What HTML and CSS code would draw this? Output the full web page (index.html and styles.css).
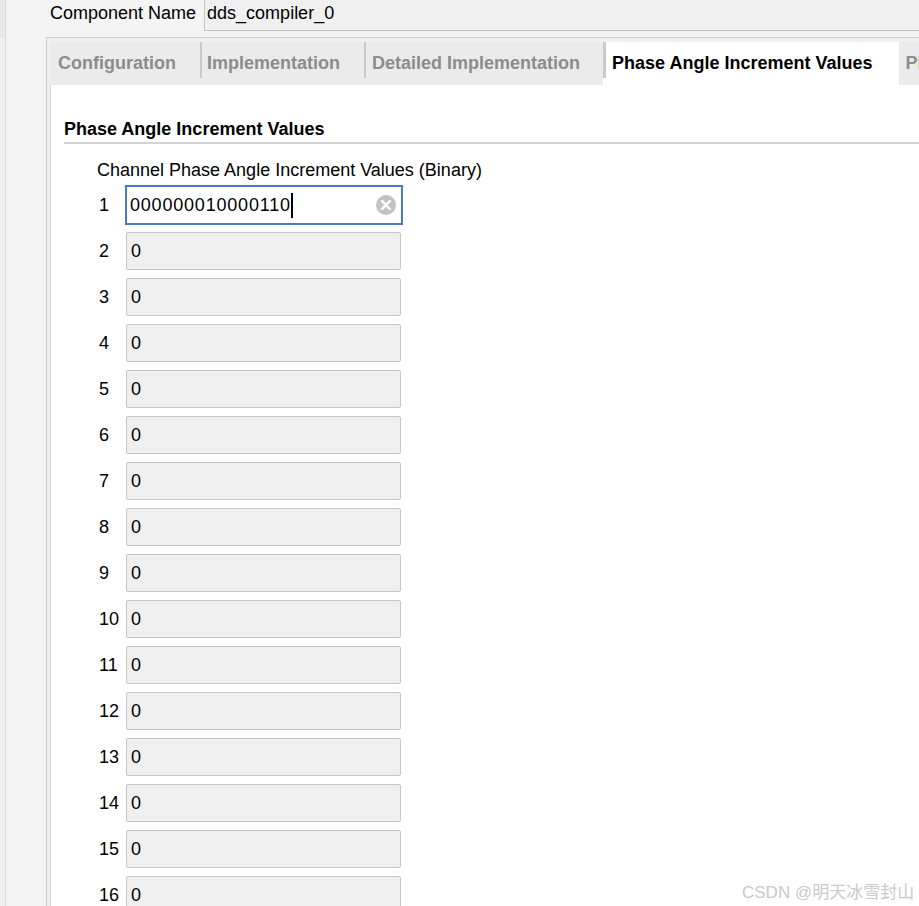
FILE: index.html
```html
<!DOCTYPE html>
<html>
<head>
<meta charset="utf-8">
<link rel="stylesheet" href="styles.css">
</head>
<body>
<div class="edge"></div>
<div class="main">
  <div class="name-row">
    <span class="name-label">Component Name</span>
    <div class="name-field">dds_compiler_0</div>
  </div>
  <div class="tabpane">
    <div class="tabs">
      <div class="tab first">Configuration</div>
      <div class="tab">Implementation</div>
      <div class="tab third">Detailed Implementation</div>
      <div class="tab active">Phase Angle Increment Values</div>
      <div class="tab last">Phase Offset Values</div>
    </div>
    <div class="content">
      <div class="section-title">Phase Angle Increment Values</div>
      <div class="field-label">Channel Phase Angle Increment Values (Binary)</div>
      <div class="rows">
        <div class="row"><span class="num">1</span><div class="input focused"><span class="val">000000010000110</span><span class="caret"></span><span class="clear"><svg width="20" height="20" viewBox="0 0 20 20"><circle cx="10" cy="10" r="10" fill="#c2c2c2"/><path d="M6.2 6.2 L13.8 13.8 M13.8 6.2 L6.2 13.8" stroke="#fff" stroke-width="2.6" stroke-linecap="round"/></svg></span></div></div>
        <div class="row"><span class="num">2</span><div class="input"><span class="val">0</span></div></div>
        <div class="row"><span class="num">3</span><div class="input"><span class="val">0</span></div></div>
        <div class="row"><span class="num">4</span><div class="input"><span class="val">0</span></div></div>
        <div class="row"><span class="num">5</span><div class="input"><span class="val">0</span></div></div>
        <div class="row"><span class="num">6</span><div class="input"><span class="val">0</span></div></div>
        <div class="row"><span class="num">7</span><div class="input"><span class="val">0</span></div></div>
        <div class="row"><span class="num">8</span><div class="input"><span class="val">0</span></div></div>
        <div class="row"><span class="num">9</span><div class="input"><span class="val">0</span></div></div>
        <div class="row"><span class="num">10</span><div class="input"><span class="val">0</span></div></div>
        <div class="row"><span class="num">11</span><div class="input"><span class="val">0</span></div></div>
        <div class="row"><span class="num">12</span><div class="input"><span class="val">0</span></div></div>
        <div class="row"><span class="num">13</span><div class="input"><span class="val">0</span></div></div>
        <div class="row"><span class="num">14</span><div class="input"><span class="val">0</span></div></div>
        <div class="row"><span class="num">15</span><div class="input"><span class="val">0</span></div></div>
        <div class="row"><span class="num">16</span><div class="input"><span class="val">0</span></div></div>
      </div>
    </div>
  </div>
</div>
<div class="watermark">CSDN @明天冰雪封山</div>
</body>
</html>
```

FILE: styles.css
```css
html, body {
  margin: 0;
  padding: 0;
  height: 906px;
  overflow: hidden;
}
body {
  display: flex;
  background: #f4f4f4;
  font-family: "Liberation Sans", Arial, sans-serif;
  font-size: 18px;
  color: #000;
}
.edge {
  width: 5px;
  flex: none;
  background: linear-gradient(#e9e9e9 0, #e9e9e9 38px, #f1f1f1 38px);
  border-right: 1px solid #dadada;
}
.main {
  flex: 1;
  min-width: 0;
}
.name-row {
  display: flex;
  height: 31px;
}
.name-label {
  margin-left: 44px;
  line-height: 26px;
  white-space: nowrap;
}
.name-field {
  flex: 1;
  margin-left: 8px;
  height: 31px;
  box-sizing: border-box;
  border-left: 1px solid #c4c4c4;
  border-bottom: 1px solid #c4c4c4;
  background: #f0f0f0;
  padding-left: 2px;
  line-height: 26px;
}
.tabpane {
  margin-left: 40px;
  margin-top: 6px;
  border-top: 1px solid #cdcdcd;
  border-left: 1px solid #cdcdcd;
  background: #f0f0f0;
  padding: 4px 0 0 4px;
}
.tabs {
  display: flex;
  height: 43px;
  background: #ebebeb;
  overflow: hidden;
  white-space: nowrap;
}
.tab {
  position: relative;
  flex: none;
  font-weight: bold;
  color: #8c8c8c;
  line-height: 42px;
  padding: 0 24px 0 7px;
}
.tab:not(.first)::before {
  content: "";
  position: absolute;
  left: 0;
  top: 0;
  width: 2px;
  height: 36px;
  background: #c9c9c9;
}
.tab.third {
  padding-left: 8px;
  padding-right: 23px;
}
.tab.active {
  background: #fff;
  color: #000;
  padding-left: 9px;
  padding-right: 27px;
}
.tab.active::before {
  width: 3px;
}
.tab.last {
  padding-left: 6px;
}
.tab.last::before {
  display: none;
}
.content {
  background: #fff;
  margin-left: -1px;
  border-left: 1px solid #d6d6d6;
  padding: 33px 0 0 13px;
  height: 900px;
}
.section-title {
  font-weight: bold;
  line-height: 22px;
  padding-bottom: 2px;
  border-bottom: 2px solid #d4d4d4;
}
.field-label {
  margin: 15px 0 1px 33px;
  line-height: 22px;
}
.rows {
  margin-left: 35px;
}
.row {
  display: flex;
  align-items: center;
  height: 46px;
}
.num {
  width: 27px;
  flex: none;
}
.input {
  position: relative;
  width: 275px;
  height: 38px;
  box-sizing: border-box;
  border: 1px solid #c6c6c6;
  border-radius: 2px;
  background: #efefef;
  padding-left: 4px;
  display: flex;
  align-items: center;
}
.val {
  letter-spacing: 0.8px;
}
.input.focused {
  width: 278px;
  height: 40px;
  margin-left: -1px;
  border: 2px solid #4b7bc4;
  border-radius: 0;
  background: #fff;
  padding-left: 3px;
}
.caret {
  width: 2px;
  height: 25px;
  background: #000;
}
.clear {
  position: absolute;
  right: 5px;
  top: 8px;
  width: 20px;
  height: 20px;
}
.clear svg {
  display: block;
}
.watermark {
  position: absolute;
  left: 742px;
  top: 878px;
  font-family: "Liberation Sans", "Noto Sans CJK SC", sans-serif;
  font-size: 17px;
  color: #cacaca;
  white-space: nowrap;
}
```
